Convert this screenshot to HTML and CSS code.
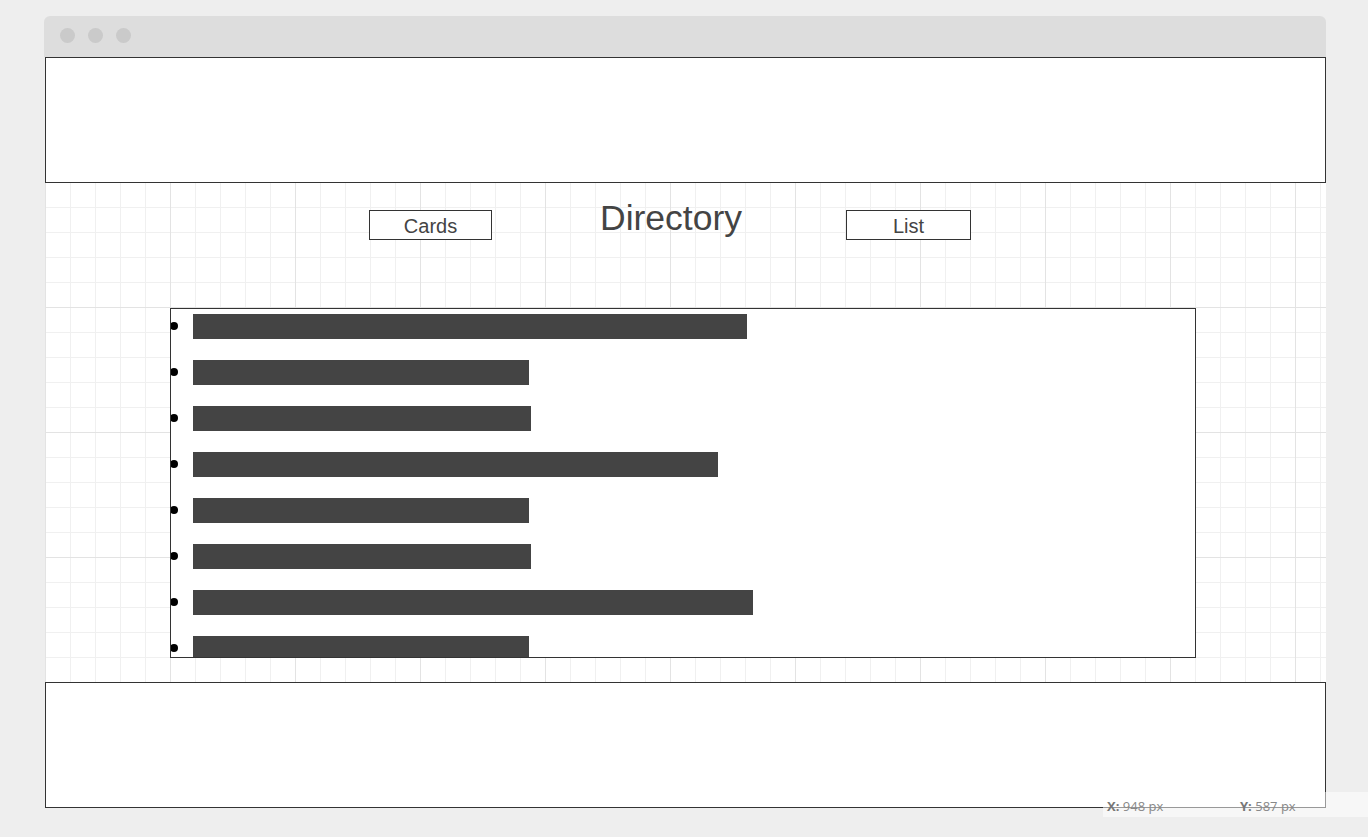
FILE: index.html
```html
<!DOCTYPE html>
<html lang="en">
<head>
<meta charset="utf-8">
<title>Directory wireframe</title>
<link rel="stylesheet" href="styles.css">
</head>
<body>
<div class="frame">
  <div class="titlebar">
    <span class="dot"></span><span class="dot"></span><span class="dot"></span>
  </div>
  <div class="panel header"></div>
  <div class="canvas">
    <div class="heading-row">
      <div class="btn btn-cards">Cards</div>
      <h1 class="title">Directory</h1>
      <div class="btn btn-list">List</div>
    </div>
    <div class="listbox">
      <ul class="items">
        <li class="item"><span class="bar" style="width:554px"></span></li>
        <li class="item"><span class="bar" style="width:336px"></span></li>
        <li class="item"><span class="bar" style="width:338px"></span></li>
        <li class="item"><span class="bar" style="width:525px"></span></li>
        <li class="item"><span class="bar" style="width:336px"></span></li>
        <li class="item"><span class="bar" style="width:338px"></span></li>
        <li class="item"><span class="bar" style="width:560px"></span></li>
        <li class="item"><span class="bar" style="width:336px"></span></li>
      </ul>
    </div>
  </div>
  <div class="panel footer"></div>
</div>
<div class="coords">
  <span class="coord coord-x"><b>X:</b> 948 px</span>
  <span class="coord coord-y"><b>Y:</b> 587 px</span>
</div>
</body>
</html>
```

FILE: styles.css
```css
html, body {
  margin: 0;
  padding: 0;
}
body {
  background: #eeeeee;
  font-family: "Liberation Sans", Arial, sans-serif;
  width: 1368px;
  height: 837px;
  overflow: hidden;
}
.frame {
  margin-left: 44px;
  margin-top: 16px;
  width: 1282px;
}
.titlebar {
  height: 41px;
  background: #dddddd;
  border-radius: 6px 6px 0 0;
  display: flex;
  align-items: flex-start;
  padding-left: 16px;
  padding-top: 12px;
  box-sizing: border-box;
  gap: 13px;
}
.dot {
  width: 15px;
  height: 15px;
  border-radius: 50%;
  background: #cacaca;
}
.panel {
  margin-left: 1px;
  width: 1281px;
  height: 126px;
  box-sizing: border-box;
  border: 1px solid #333333;
  background: #ffffff;
}
.canvas {
  margin-left: 1px;
  width: 1281px;
  height: 499px;
  box-sizing: border-box;
  background-color: #ffffff;
  background-image:
    linear-gradient(to right, #e3e3e3 1px, transparent 1px),
    linear-gradient(to bottom, #e3e3e3 1px, transparent 1px),
    linear-gradient(to right, #f0f0f0 1px, transparent 1px),
    linear-gradient(to bottom, #f0f0f0 1px, transparent 1px);
  background-size: 125px 125px, 125px 125px, 25px 25px, 25px 25px;
  background-position: 0 -1px, 0 -1px, 0 -1px, 0 -1px;
  display: flex;
  flex-direction: column;
}
.heading-row {
  height: 125px;
  box-sizing: border-box;
  padding-top: 18px;
  display: flex;
  align-items: flex-start;
}
.btn {
  margin-top: 9px;
  height: 30px;
  box-sizing: border-box;
  border: 1px solid #333333;
  background: #ffffff;
  color: #444444;
  font-size: 20px;
  line-height: 28px;
  padding-top: 1px;
  text-align: center;
}
.btn-cards {
  margin-left: 324px;
  width: 123px;
}
.title {
  margin: 0 0 0 108px;
  font-weight: normal;
  font-size: 35.5px;
  line-height: 35px;
  color: #444444;
  width: 146px;
}
.btn-list {
  margin-left: 100px;
  width: 125px;
}
.listbox {
  margin-left: 125px;
  width: 1026px;
  height: 350px;
  box-sizing: border-box;
  border: 1px solid #333333;
  background: #ffffff;
  overflow: hidden;
}
.items {
  list-style: none;
  margin: 0;
  padding: 0;
}
.item {
  height: 46px;
  box-sizing: border-box;
  padding-top: 5px;
  display: flex;
  align-items: flex-start;
}
.item::before {
  content: "";
  width: 8px;
  height: 8px;
  border-radius: 50%;
  background: #000000;
  margin-left: -1px;
  margin-top: 8px;
  flex: none;
}
.bar {
  display: block;
  height: 25px;
  background: #444444;
  margin-left: 15px;
}
.coords {
  position: absolute;
  left: 1103px;
  top: 792px;
  width: 265px;
  height: 25px;
  background: rgba(255, 255, 255, 0.5);
  font-family: "Open Sans", sans-serif;
  font-size: 13px;
  color: #888888;
  line-height: 28px;
}
.coord {
  position: absolute;
  top: 0;
}
.coord b {
  color: #777777;
}
.coord-x {
  left: 4px;
}
.coord-y {
  left: 137px;
}
```
